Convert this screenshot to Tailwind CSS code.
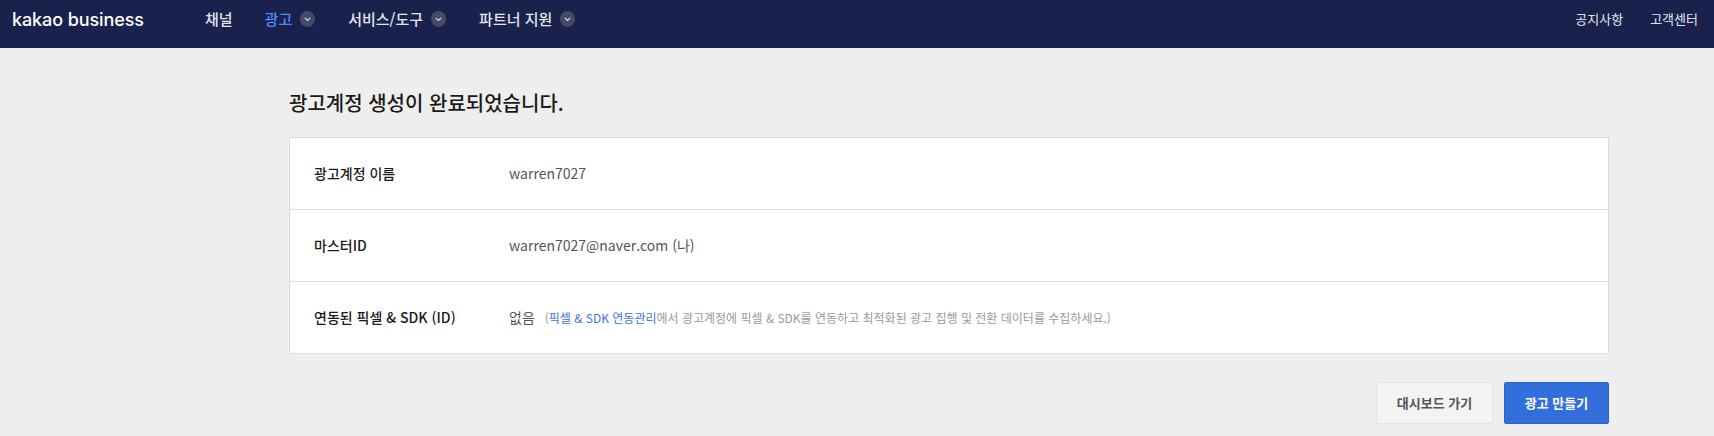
<!DOCTYPE html>
<html lang="ko">
<head>
<meta charset="utf-8">
<title>광고계정 생성 완료</title>
<script src="https://cdn.jsdelivr.net/npm/@tailwindcss/browser@4"></script>
</head>
<body class="bg-[#eeeeee] h-[436px] overflow-hidden font-['Noto_Sans_CJK_KR','Noto_Sans',sans-serif]">

<header class="h-12 bg-[#19224c] flex items-start justify-between pl-3 pr-[16px] pt-[7px]">
  <div class="flex items-center h-[24px]">
    <a class="w-[193px] text-[18px] font-medium tracking-[-0.1px] text-white font-['Inter','Noto_Sans',sans-serif]">kakao business</a>
    <nav class="flex items-center text-[15px] font-medium text-[#e3e5ec]">
      <a class="mr-8">채널</a>
      <a class="flex items-center gap-[8px] mr-[33px] text-[#4f8bff]">광고
        <svg class="w-[15px] h-4" viewBox="0 0 15 16"><ellipse cx="7.5" cy="8" rx="7.5" ry="8" fill="#454a68"/><path d="M4.8 6.8 7.5 9.4l2.7-2.6" fill="none" stroke="#e3e5ec" stroke-width="1.1"/></svg>
      </a>
      <a class="flex items-center gap-[8px] mr-[33px]">서비스/도구
        <svg class="w-[15px] h-4" viewBox="0 0 15 16"><ellipse cx="7.5" cy="8" rx="7.5" ry="8" fill="#454a68"/><path d="M4.8 6.8 7.5 9.4l2.7-2.6" fill="none" stroke="#e3e5ec" stroke-width="1.1"/></svg>
      </a>
      <a class="flex items-center gap-[8px]">파트너 지원
        <svg class="w-[15px] h-4" viewBox="0 0 15 16"><ellipse cx="7.5" cy="8" rx="7.5" ry="8" fill="#454a68"/><path d="M4.8 6.8 7.5 9.4l2.7-2.6" fill="none" stroke="#e3e5ec" stroke-width="1.1"/></svg>
      </a>
    </nav>
  </div>
  <div class="flex items-center h-[24px] gap-[27px] text-[13px] text-[#e3e5ec]">
    <a>공지사항</a>
    <a>고객센터</a>
  </div>
</header>

<main class="w-[1320px] ml-[289px]">
  <h1 class="mt-[40px] mb-[19px] text-[20px] leading-[30px] font-medium text-[#1a1a1a]">광고계정 생성이 완료되었습니다.</h1>

  <div class="bg-white border border-[#dddddd] text-[14px]">
    <div class="flex items-center h-[72px] border-b border-[#dddddd] pl-6">
      <div class="w-[195px] font-medium text-[#1a1a1a]">광고계정 이름</div>
      <div class="text-[#555555]">warren7027</div>
    </div>
    <div class="flex items-center h-[72px] border-b border-[#dddddd] pl-6">
      <div class="w-[195px] font-medium text-[#1a1a1a]">마스터ID</div>
      <div class="text-[#555555]">warren7027@naver.com (나)</div>
    </div>
    <div class="flex items-center h-[71px] pl-6">
      <div class="w-[195px] font-medium text-[#1a1a1a]">연동된 픽셀 &amp; SDK (ID)</div>
      <div class="text-[#555555]">없음</div>
      <div class="ml-[10px] text-[12px] text-[#999999]">(<a class="text-[#3f6fe0]">픽셀 &amp; SDK 연동관리</a>에서 광고계정에 픽셀 &amp; SDK를 연동하고 최적화된 광고 집행 및 전환 데이터를 수집하세요.)</div>
    </div>
  </div>

  <div class="flex justify-end gap-[11px] mt-[28px]">
    <button class="w-[117px] h-[42px] bg-[#f3f3f3] border border-[#e3e3e3] rounded-[2px] text-[13px] font-bold text-[#555555]">대시보드 가기</button>
    <button class="w-[105px] h-[42px] bg-[#326edc] border border-[#2b63cc] rounded-[2px] text-[13px] font-bold text-white">광고 만들기</button>
  </div>
</main>

</body>
</html>
